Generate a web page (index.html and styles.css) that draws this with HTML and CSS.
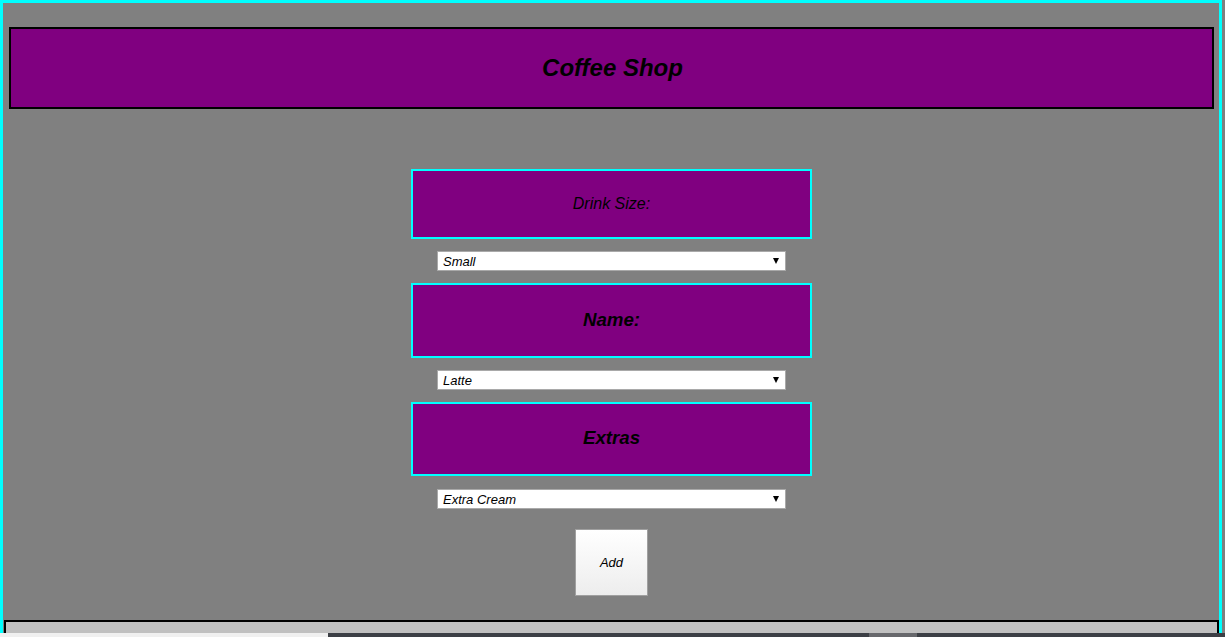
FILE: index.html
```html
<!DOCTYPE html>
<html lang="en">
<head>
<meta charset="utf-8">
<title>Coffee Shop</title>
<link rel="stylesheet" href="styles.css">
</head>
<body>
<div class="page">
  <header class="site-header">
    <h2 class="title">Coffee Shop</h2>
  </header>
  <main class="order">
    <div class="label-box box-size"><p class="label-text">Drink Size:</p></div>
    <div class="select-wrap">
      <select class="picker">
        <option>Small</option>
        <option>Medium</option>
        <option>Large</option>
      </select>
      <span class="arrow"></span>
    </div>
    <div class="label-box box-name"><h3 class="label-head">Name:</h3></div>
    <div class="select-wrap">
      <select class="picker">
        <option>Latte</option>
        <option>Mocha</option>
        <option>Espresso</option>
      </select>
      <span class="arrow"></span>
    </div>
    <div class="label-box box-extras"><h3 class="label-head">Extras</h3></div>
    <div class="select-wrap sel-last">
      <select class="picker">
        <option>Extra Cream</option>
        <option>Extra Sugar</option>
        <option>Extra Shot</option>
      </select>
      <span class="arrow"></span>
    </div>
    <button class="add-btn" type="button">Add</button>
  </main>
  <footer class="site-footer"></footer>
</div>
<div class="bottom-strip">
  <span class="strip-a"></span>
  <span class="strip-b"></span>
  <span class="strip-c"></span>
  <span class="strip-d"></span>
</div>
</body>
</html>
```

FILE: styles.css
```css
html {
  background: #808080;
}
body {
  margin: 0;
  font-family: "Liberation Sans", Arial, sans-serif;
  color: #000;
}
.page {
  width: 1222px;
  box-sizing: border-box;
  border: 3px solid #00ffff;
  background: #808080;
  display: flex;
  flex-direction: column;
}
.site-header {
  margin: 24px 5px 0 6px;
  height: 82px;
  box-sizing: border-box;
  border: 2px solid #000;
  background: #800080;
  display: flex;
  align-items: center;
  justify-content: center;
}
.title {
  margin: 0;
  padding-left: 2px;
  font-size: 24px;
  font-weight: bold;
  font-style: italic;
  line-height: 28px;
}
.order {
  display: flex;
  flex-direction: column;
  align-items: center;
  margin-top: 60px;
  margin-left: 1px;
}
.label-box {
  width: 401px;
  box-sizing: border-box;
  border: 2px solid #00ffff;
  background: #800080;
  display: flex;
  align-items: center;
  justify-content: center;
}
.box-size { height: 70px; }
.box-name { height: 75px; }
.box-extras { height: 74px; }
.label-text {
  margin: 0;
  font-size: 16px;
  font-style: italic;
  line-height: 20px;
  padding-bottom: 1px;
}
.label-head {
  margin: 0;
  font-size: 18.72px;
  font-weight: bold;
  font-style: italic;
  line-height: 22px;
  padding-bottom: 2px;
}
.select-wrap {
  position: relative;
  width: 349px;
  height: 20px;
  margin: 12px 0;
}
.sel-last {
  margin: 13px 0 20px;
}
.picker {
  -webkit-appearance: none;
  appearance: none;
  display: block;
  width: 349px;
  height: 20px;
  box-sizing: border-box;
  border: 1px solid #a9a9a9;
  border-radius: 0;
  background: #fff;
  padding: 1px 0 0 5px;
  margin: 0;
  font-family: "Liberation Sans", Arial, sans-serif;
  font-size: 13px;
  font-style: italic;
  line-height: 17px;
  color: #000;
}
.arrow {
  position: absolute;
  right: 7px;
  top: 7px;
  width: 0;
  height: 0;
  border-left: 3.5px solid transparent;
  border-right: 3.5px solid transparent;
  border-top: 6px solid #000;
  pointer-events: none;
}
.add-btn {
  width: 73px;
  height: 67px;
  box-sizing: border-box;
  border: 1px solid #a0a0a0;
  border-radius: 0;
  background: linear-gradient(#ffffff, #ededed);
  font-family: "Liberation Sans", Arial, sans-serif;
  font-size: 13px;
  font-style: italic;
  color: #000;
  padding: 0;
  margin: 0;
}
.site-footer {
  margin: 24px 0 0 1px;
  height: 40px;
  box-sizing: border-box;
  border: 2px solid #000;
  background: #c0c0c0;
}
.bottom-strip {
  position: fixed;
  left: 0;
  right: 0;
  bottom: 0;
  height: 4px;
  display: flex;
}
.strip-a { width: 328px; background: #f0f0f0; }
.strip-b { width: 541px; background: #3c3f45; }
.strip-c { width: 48px; background: #67686c; }
.strip-d { flex: 1; background: #3c3f45; }
```
